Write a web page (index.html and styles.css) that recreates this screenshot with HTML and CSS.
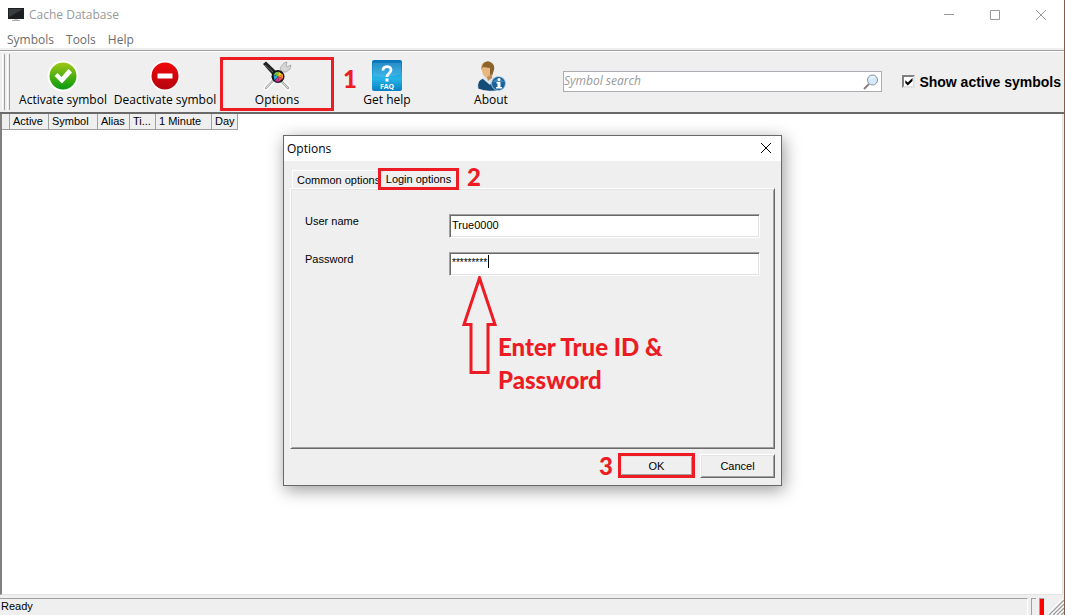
FILE: index.html
```
<!DOCTYPE html>
<html lang="en">
<head>
    <meta charset="UTF-8">
    <meta name="viewport" content="width=device-width, initial-scale=1.0">
    <title>Cache Database</title>
    <link rel="stylesheet" href="styles.css">
</head>
<body>
    <div class="window">
        <header class="titlebar">
            <svg class="app-icon" width="16" height="15" viewBox="0 0 16 15">
                <rect x="0" y="0" width="16" height="11" fill="#1d1e20"/>
                <path d="M1 1h14L1 9z" fill="#3a3c3f"/>
                <path d="M6 11h4v1H6z" fill="#ccc"/>
                <path d="M4 12h8v1H4z" fill="#aaa"/>
            </svg>
            <h1 class="title">Cache Database</h1>
            <div class="window-buttons">
                <button type="button" aria-label="Minimize"><svg width="11" height="11" viewBox="0 0 11 11"><path d="M0 4.500h10"/></svg></button>
                <button type="button" aria-label="Maximize"><svg width="11" height="11" viewBox="0 0 11 11"><path d="M.5.5h9v9h-9z"/></svg></button>
                <button type="button" aria-label="Close"><svg width="11" height="11" viewBox="0 0 11 11"><path d="M0 0l10 10M10 0L0 10"/></svg></button>
            </div>
        </header>

        <nav class="menubar">
            <button type="button">Symbols</button>
            <button type="button">Tools</button>
            <button type="button">Help</button>
        </nav>

        <div class="toolbar">
            <div class="grip"></div>
            <div class="grip"></div>
            <button type="button" class="tool">
                <svg width="32" height="32" viewBox="0 0 32 32">
                    <defs>
                        <linearGradient id="green" x1="0" y1="0" x2="0" y2="1"><stop offset="0" stop-color="#a0c814"/><stop offset="1" stop-color="#069a10"/></linearGradient>
                    </defs>
                    <circle cx="16" cy="16" r="15.500" fill="#fff"/>
                    <circle cx="16" cy="16" r="13.500" fill="url(#green)"/>
                    <path d="M7.500 16l3-3 4 4L21.500 9l3.500 3.500-10 11z" fill="#fff"/>
                </svg>
                Activate symbol
            </button>
            <button type="button" class="tool">
                <svg width="32" height="32" viewBox="0 0 32 32">
                    <defs>
                        <linearGradient id="red" x1="0" y1="0" x2="0" y2="1"><stop offset="0" stop-color="#f00808"/><stop offset="1" stop-color="#b40410"/></linearGradient>
                    </defs>
                    <circle cx="16" cy="16" r="15" fill="#fff"/>
                    <circle cx="16" cy="16" r="13.500" fill="url(#red)"/>
                    <rect x="8.500" y="13.500" width="15" height="5" fill="#fff"/>
                </svg>
                Deactivate symbol
            </button>
            <button type="button" class="tool tool-options">
                <svg width="32" height="32" viewBox="0 0 32 32">
                    <path d="M5 28L22 10M27 28L11 12" stroke="#fff" stroke-width="5" stroke-linecap="round"/>
                    <path d="M5 28L21 11M27 28L13 14" stroke="#aaa" stroke-width="2.500" stroke-linecap="round"/>
                    <path d="M5 28L21 11M27 28L13 14" stroke="#ddd" stroke-width="1"/>
                    <path d="M21 12l-2-4 4-5 3-1-1 4 1 1 4-2-1 4-4 3z" fill="#d5d7d9" stroke="#999" stroke-width=".7"/>
                    <path d="M2 4l3-2.500L16 12l-3.500 4z" fill="#222"/>
                    <path d="M4 5l9 8" stroke="#777" stroke-width=".8"/>
                    <circle cx="17" cy="16.500" r="6.500" fill="#151515"/>
                    <path d="M17 16.500L12.500 14.500 15 12h2.500z" fill="#60c840"/>
                    <path d="M17 16.500l.500-5 4 3z" fill="#f0d020"/>
                    <path d="M17 16.500l5-2.500v4.500z" fill="#f08a24"/>
                    <path d="M17 16.500l5 2-4 3z" fill="#ec4a50"/>
                    <path d="M17 16.500l1 5.500-4-1z" fill="#e030a0"/>
                    <path d="M17 16.500l-3.500 4-1-5.500z" fill="#28a8e0"/>
                </svg>
                Options
                <span class="step step-1">1</span>
            </button>
            <button type="button" class="tool tool-help">
                <svg width="32" height="32" viewBox="0 0 32 32">
                    <defs>
                        <linearGradient id="blue" x1="0" y1="0" x2="0" y2="1"><stop offset="0" stop-color="#0873b8"/><stop offset=".6" stop-color="#25b4e8"/><stop offset="1" stop-color="#0b7fc2"/></linearGradient>
                    </defs>
                    <rect x="1" y="0" width="30" height="31" rx="2" fill="url(#blue)"/>
                    <path d="M2 16Q16 19 30 14V3H2z" fill="#fff" opacity=".12"/>
                    <path d="M12 10.500c0-5 8-5 8-.5 0 3.500-4 3.500-4 7" fill="none" stroke="#fff" stroke-width="2.800"/>
                    <rect x="14.500" y="18.500" width="3" height="3" fill="#fff"/>
                    <text x="16" y="29" text-anchor="middle" class="faq">FAQ</text>
                </svg>
                Get help
            </button>
            <button type="button" class="tool">
                <svg width="32" height="32" viewBox="0 0 32 32">
                    <path d="M3 29q-2-9 6-11l8-1 8 4 1 9q-12 3-23-1z" fill="#144c78" stroke="#fff" stroke-width=".8"/>
                    <path d="M8 19l3-4h6l2 4-4 6z" fill="#dce6ee"/>
                    <path d="M6 7q1-6 7-5 5 1 5 6l-1 7-4 4-5-4z" fill="#e8b681"/>
                    <path d="M8 4q4-5 9-1 3 2 2 7l-2 6-2-1V8l-7-1-2 3z" fill="#8b642d"/>
                    <path d="M12 17l5-3v4l-4 3z" fill="#c18b55"/>
                    <circle cx="23.500" cy="23.500" r="7" fill="#19639b" stroke="#b8d4e8" stroke-width=".8"/>
                    <path d="M17.500 22q5-6 12 0z" fill="#4687b5"/>
                    <circle cx="24" cy="19.500" r="1.500" fill="#fff"/>
                    <path d="M21.500 22h4v5h1.500v1.500h-6V27h1.500v-3.500h-1z" fill="#fff"/>
                </svg>
                About
            </button>
            <div class="search">
                <input type="text" placeholder="Symbol search" aria-label="Symbol search">
                <button type="button" aria-label="Search">
                    <svg width="16" height="16" viewBox="0 0 16 16">
                        <path d="M1 15l5-5" stroke="#8a8080" stroke-width="2"/>
                        <circle cx="9.500" cy="6" r="5" fill="#d4eafc" stroke="#8790a0" stroke-width="1"/>
                        <path d="M6.500 5q2-3 5-2" fill="none" stroke="#fff"/>
                    </svg>
                </button>
            </div>
            <label class="check"><input type="checkbox" checked>Show active symbols</label>
        </div>

        <main class="list">
            <table>
                <thead>
                    <tr>
                        <th class="col-mark"></th>
                        <th class="col-active">Active</th>
                        <th class="col-symbol">Symbol</th>
                        <th class="col-alias">Alias</th>
                        <th class="col-title">Ti...</th>
                        <th class="col-minute">1 Minute</th>
                        <th class="col-day">Day</th>
                    </tr>
                </thead>
            </table>
        </main>

        <footer class="statusbar">
            <div class="status-text">Ready</div>
            <div class="status-cell"></div>
            <div class="status-light"></div>
            <svg width="16" height="16" viewBox="0 0 16 16"><path d="M0 16L16 0M4 16L16 4M8 16l8-8M12 16l4-4" stroke="#fff" stroke-width="2.500"/><path d="M1 16L16 1M5 16L16 5M9 16l7-7M13 16l3-3" stroke="#9a9a9a" stroke-width="1.300"/></svg>
        </footer>
    </div>

    <form class="dialog" role="dialog" aria-labelledby="dialogTitle">
        <div class="dialog-title">
            <h2 id="dialogTitle">Options</h2>
            <button type="button" aria-label="Close"><svg width="11" height="11" viewBox="0 0 11 11"><path d="M0 0l10 10M10 0L0 10"/></svg></button>
        </div>
        <div class="dialog-body">
            <div class="tabs">
                <button type="button" class="tab">Common options</button>
                <button type="button" class="tab tab-active">Login options</button>
                <span class="step">2</span>
            </div>
            <div class="panel">
                <div class="field">
                    <label for="userName">User name</label>
                    <input type="text" id="userName" value="True0000">
                </div>
                <div class="field">
                    <label for="password">Password</label>
                    <input type="text" id="password" class="masked" value="*********" autocomplete="off">
                    <span class="caret"></span>
                </div>
                <div class="note">
                    <svg width="36" height="102" viewBox="0 0 36 102"><path d="M17.500 3L33 49.500H26V97.500H9V49.500H2z" fill="none" stroke="#ed1c24" stroke-width="3"/></svg>
                    <p>Enter True ID &amp; Password</p>
                </div>
            </div>
            <div class="actions">
                <span class="step">3</span>
                <button type="submit" class="action action-ok">OK</button>
                <button type="button" class="action">Cancel</button>
            </div>
        </div>
    </form>
</body>
</html>
```
FILE: styles.css
```
* {
    box-sizing: border-box;
}

body {
    margin: 0;
    font-family: "Liberation Sans", Arial, sans-serif;
    font-size: 11px;
    line-height: 16px;
    color: #000;
    background-color: #fff;
}

button {
    margin: 0;
    padding: 0;
    border: none;
    background: none;
    font: inherit;
    color: inherit;
}

h1, h2, p {
    margin: 0;
    font-weight: normal;
}

svg {
    display: block;
    flex: none;
}

.window {
    display: flex;
    flex-direction: column;
    height: 100vh;
    background-color: #efefef;
    border-right: 1px solid #8b5a46;
}

/* Title bar */
.titlebar {
    display: flex;
    align-items: center;
    height: 30px;
    padding-left: 8px;
    background-color: #fff;
}

.title {
    flex: 1;
    margin-left: 5px;
    font-family: "Open Sans", sans-serif;
    font-size: 12px;
    color: #999;
}

.window-buttons {
    display: flex;
}

.window-buttons button {
    display: flex;
    align-items: center;
    justify-content: center;
    width: 46px;
    height: 28px;
}

.window-buttons path {
    fill: none;
    stroke: #999;
}

.menubar {
    display: flex;
    gap: 12px;
    height: 18px;
    padding-left: 7px;
    background-color: #fff;
    font-family: "Open Sans", sans-serif;
    font-size: 12px;
    color: #6d6d6d;
}

.menubar button {
    height: 20px;
}

/* Toolbar */
.toolbar {
    display: flex;
    align-items: center;
    height: 64px;
    margin-top: 2px;
    padding-left: 2px;
    border-top: 1px solid #a0a0a0;
    border-bottom: 2px solid #696969;
    box-shadow: inset 0 1px #fff;
}

.grip {
    width: 3px;
    height: 56px;
    margin-right: 2px;
    border-left: 1px solid #fff;
    border-right: 1px solid #a0a0a0;
}

.tool {
    position: relative;
    display: flex;
    flex-direction: column;
    align-items: center;
    align-self: flex-end;
    flex: none;
    width: 102px;
    height: 54px;
    margin-bottom: 1px;
    padding-top: 3px;
    font-family: "Open Sans", sans-serif;
    font-size: 12px;
    white-space: nowrap;
}

.tool-options {
    width: 114px;
    margin-left: 4px;
    padding-top: 0;
    border: 3px solid #ed1c24;
}

.tool-help {
    width: 106px;
}

.faq {
    font-family: "Open Sans", sans-serif;
    font-size: 7px;
    font-weight: bold;
    fill: #fff;
}

.step {
    font-family: Lato, sans-serif;
    font-size: 24px;
    line-height: 22px;
    font-weight: 900;
    color: #ed1c24;
}

.step-1 {
    position: absolute;
    left: 120px;
    top: 8px;
}

.search {
    display: flex;
    align-items: center;
    flex: 1;
    height: 21px;
    margin-left: 21px;
    margin-right: 20px;
    padding-right: 2px;
    background-color: #fff;
    border: 1px solid #abadb3;
}

.search input {
    flex: 1;
    min-width: 0;
    padding: 0 0 2px 0;
    border: none;
    outline: none;
    font-family: "Open Sans", sans-serif;
    font-size: 12px;
    font-style: italic;
}

.search input::placeholder {
    color: #999;
}

.check {
    display: flex;
    align-items: center;
    gap: 4px;
    padding-right: 3px;
    font-size: 14px;
    font-weight: bold;
    white-space: nowrap;
}

.check input {
    appearance: none;
    width: 13px;
    height: 13px;
    margin: 0;
    background-color: #fff;
    border: 2px solid;
    border-color: #808080 #e3e3e3 #e3e3e3 #808080;
}

.check input:checked::before {
    content: "";
    display: block;
    width: 9px;
    height: 9px;
    background-color: #000;
    clip-path: polygon(10% 35%, 38% 60%, 90% 10%, 90% 45%, 38% 95%, 10% 68%);
}

/* Symbol list */
.list {
    flex: 1;
    margin-right: 1px;
    background-color: #fff;
    border-left: 2px solid #808080;
    border-right: 1px solid #e3e3e3;
    border-bottom: 1px solid #e3e3e3;
}

.list table {
    border-collapse: separate;
    border-spacing: 0;
    table-layout: fixed;
    width: 236px;
}

.list th {
    height: 16px;
    padding: 0 0 0 3px;
    line-height: 15px;
    font-weight: normal;
    text-align: left;
    white-space: nowrap;
    background-color: #efefef;
    border-right: 1px solid #a0a0a0;
    border-bottom: 1px solid #a0a0a0;
}

.col-mark {
    width: 8px;
}

.col-active {
    width: 39px;
}

.col-symbol {
    width: 49px;
}

.col-alias {
    width: 32px;
}

.col-title {
    width: 26px;
}

.col-minute {
    width: 56px;
}

.col-day {
    width: 26px;
}

/* Status bar */
.statusbar {
    display: flex;
    align-items: flex-end;
    gap: 3px;
    height: 20px;
    padding-top: 3px;
}

.status-text {
    flex: 1;
    height: 17px;
    padding-left: 1px;
    line-height: 15px;
    border-top: 1px solid #a0a0a0;
    border-right: 1px solid #fff;
}

.status-cell {
    width: 5px;
    height: 17px;
    border-top: 1px solid #a0a0a0;
    border-left: 1px solid #a0a0a0;
}

.status-light {
    width: 5px;
    height: 17px;
    margin-right: 1px;
    background-color: #f00;
    border-top: 1px solid #a0a0a0;
    border-left: 1px solid #a0a0a0;
}

/* Options dialog */
.dialog {
    position: absolute;
    left: 283px;
    top: 135px;
    width: 499px;
    background-color: #efefef;
    border: 1px solid #696969;
    box-shadow: 2px 4px 16px rgba(0, 0, 0, 0.4);
}

.dialog-title {
    display: flex;
    align-items: center;
    justify-content: space-between;
    height: 25px;
    padding: 0 9px 0 3px;
    background-color: #fff;
}

.dialog-title h2 {
    font-family: "Open Sans", sans-serif;
    font-size: 12px;
    line-height: 14px;
}

.dialog-title path {
    stroke: #000;
}

.dialog-body {
    padding: 7px 6px;
}

.tabs {
    display: flex;
    align-items: flex-end;
    height: 20px;
    padding-left: 2px;
}

.tab {
    width: 86px;
    height: 18px;
    padding-left: 4px;
    text-align: left;
    border-left: 1px solid #fff;
    border-top: 1px solid #fff;
    white-space: nowrap;
}

.tab-active {
    z-index: 1;
    width: 81px;
    height: 22px;
    padding: 0;
    margin-bottom: -2px;
    line-height: 14px;
    text-align: center;
    background-color: #efefef;
    border: 3px solid #ed1c24;
}

.tabs .step {
    margin-left: 8px;
}

.panel {
    height: 261px;
    padding: 25px 14px 0;
    border: 1px solid;
    border-color: #fff #696969 #696969 #fff;
    box-shadow: inset 1px 1px #e3e3e3, inset -1px -1px #a0a0a0;
}

.field {
    position: relative;
    display: flex;
    height: 24px;
    margin-bottom: 14px;
}

.field label {
    width: 144px;
    line-height: 14px;
}

.field input {
    flex: 1;
    min-width: 0;
    height: 24px;
    padding: 0 2px 3px;
    font: inherit;
    background-color: #fff;
    border: 1px solid;
    border-color: #a0a0a0 #fff #fff #a0a0a0;
    box-shadow: inset 1px 1px #696969, inset -1px -1px #e3e3e3;
    outline: none;
}

.field .masked {
    font-size: 10px;
}

.caret {
    position: absolute;
    left: 183px;
    top: 3px;
    width: 1px;
    height: 13px;
    background-color: #000;
}

.note {
    display: flex;
    margin-top: -15px;
    padding-left: 157px;
}

.note p {
    width: 190px;
    padding-top: 55px;
    font-family: Lato, sans-serif;
    font-size: 24px;
    line-height: 33px;
    font-weight: 900;
    color: #ed1c24;
}

.actions {
    display: flex;
    align-items: center;
    justify-content: flex-end;
    gap: 5px;
    padding-top: 4px;
}

.action {
    width: 75px;
    height: 24px;
    border: 1px solid;
    border-color: #fff #696969 #696969 #fff;
    box-shadow: inset 1px 1px #e3e3e3, inset -1px -1px #a0a0a0;
}

.action-ok {
    width: 77px;
    height: 25px;
    border: 3px solid #ed1c24;
}
```
